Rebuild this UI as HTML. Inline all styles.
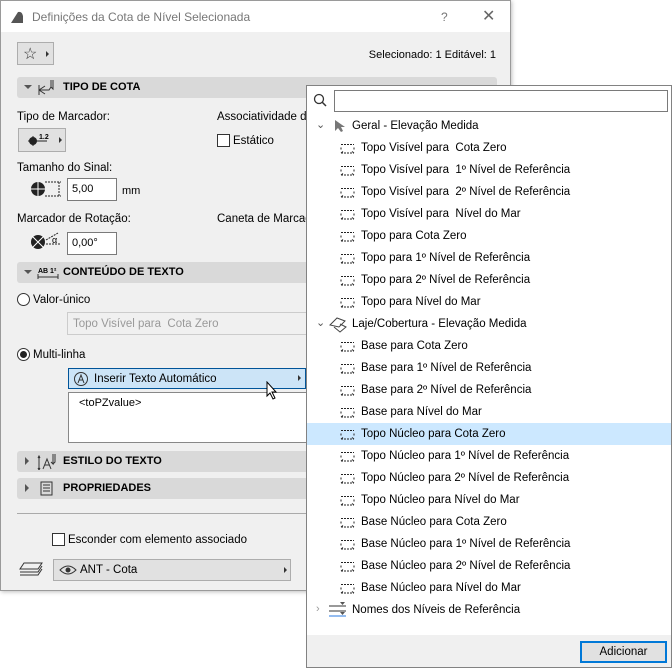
<!DOCTYPE html>
<html><head><meta charset="utf-8"><style>
*{margin:0;padding:0;box-sizing:border-box}
body{width:672px;height:668px;background:#fff;position:relative;overflow:hidden;font-family:"Liberation Sans",sans-serif;font-size:11.5px;color:#000}
.a{position:absolute;white-space:nowrap}
#dlg{position:absolute;left:0;top:0;width:511px;height:591px;background:#f0f0f0;border:1px solid #9a9a9a;box-shadow:1px 1px 4px rgba(0,0,0,.25)}
#tb{position:absolute;left:0;top:0;width:509px;height:31px;background:#fff}
.bar{position:absolute;left:16px;width:480px;height:21px;background:#d9d9d9;border-radius:3px;font-weight:bold;font-size:11px}
.bar .t{position:absolute;left:46px;top:4px}
.tri{position:absolute;left:7px;top:8px;width:0;height:0;border-left:4px solid transparent;border-right:4px solid transparent;border-top:4px solid #555}
.trr{position:absolute;left:8px;top:6px;width:0;height:0;border-top:4px solid transparent;border-bottom:4px solid transparent;border-left:4px solid #555}
.btn{position:absolute;background:#e1e1e1;border:1px solid #adadad}
.inp{position:absolute;background:#fff;border:1px solid #7a7a7a;padding:4px 4px;font-size:11px}
.cb{position:absolute;width:13px;height:13px;border:1px solid #333;background:#fff}
#pop{position:absolute;left:306px;top:85px;width:366px;height:583px;background:#fff;border:1px solid #828282}
.it{position:absolute;left:0;width:364px;height:22px}
.it .t{position:absolute;left:54px;top:5px}
.it svg{position:absolute;left:33px;top:6px}
.hl{background:#cce8ff}
</style></head><body>
<div id="dlg">
<div id="tb">
<svg class="a" style="left:9px;top:9px" width="14" height="14"><path d="M1 13 L8 2 Q12 1 13 6 L13 13 Z" fill="#555"/></svg>
<div class="a" style="left:31px;top:9px;font-size:12px;color:#777">Definições da Cota de Nível Selecionada</div>
<div class="a" style="left:440px;top:9px;font-size:12px;color:#777">?</div>
<div class="a" style="left:481px;top:5px;font-size:16px;color:#666">✕</div>
</div>
<div class="btn" style="left:16px;top:41px;width:37px;height:23px"><span class="a" style="left:5px;top:1px;font-size:16px;color:#333">☆</span><span class="a" style="left:28px;top:8px;border-top:3px solid transparent;border-bottom:3px solid transparent;border-left:3px solid #333"></span></div>
<div class="a" style="right:14px;top:48px;font-size:11px">Selecionado: 1 Editável: 1</div>

<div class="bar" style="top:76px"><div class="tri"></div>
<svg class="a" style="left:20px;top:2px" width="22" height="17"><path d="M2 6 V16 M2 11 L8 15 M2 11 L8 7 M2 11 H12 L14 8 V1 M14 8 L16 10 V1" stroke="#333" fill="none"/></svg>
<div class="t">TIPO DE COTA</div></div>
<div class="a" style="left:16px;top:110px">Tipo de Marcador:</div>
<div class="a" style="left:216px;top:110px">Associatividade d</div>
<div class="btn" style="left:17px;top:127px;width:48px;height:24px"><svg class="a" style="left:8px;top:3px" width="30" height="16"><circle cx="6" cy="9" r="4" fill="#222"/><path d="M1 9 H20 M6 4 V14" stroke="#222"/><text x="12" y="7" font-size="7" font-weight="bold" font-family="Liberation Sans">1.2</text></svg><span class="a" style="left:40px;top:8px;border-top:3px solid transparent;border-bottom:3px solid transparent;border-left:3px solid #333"></span></div>
<div class="cb" style="left:216px;top:133px"></div>
<div class="a" style="left:232px;top:134px">Estático</div>
<div class="a" style="left:16px;top:161px">Tamanho do Sinal:</div>
<svg class="a" style="left:27px;top:177px" width="36" height="22"><circle cx="10" cy="11" r="7" fill="#222"/><path d="M3 11 H17 M10 4 V18" stroke="#fff"/><path d="M17 4 H28 M17 18 H28 M31 4 V18 M29 4 H33 M29 18 H33" stroke="#222" stroke-dasharray="2 1"/></svg>
<div class="inp" style="left:66px;top:177px;width:50px;height:23px">5,00</div>
<div class="a" style="left:121px;top:184px;font-size:11px">mm</div>
<div class="a" style="left:16px;top:212px">Marcador de Rotação:</div>
<div class="a" style="left:216px;top:212px">Caneta de Marcad</div>
<svg class="a" style="left:27px;top:229px" width="36" height="22"><circle cx="10" cy="12" r="7" fill="#222"/><path d="M4 6 L16 18 M4 18 L16 6" stroke="#fff"/><path d="M18 10 L30 3 M18 14 H32" stroke="#222" stroke-dasharray="2 1"/><text x="24" y="13" font-size="9" font-family="Liberation Sans">α</text></svg>
<div class="inp" style="left:66px;top:231px;width:50px;height:23px">0,00°</div>

<div class="bar" style="top:261px"><div class="tri"></div>
<svg class="a" style="left:20px;top:2px" width="24" height="17"><text x="1" y="9" font-size="7" font-family="Liberation Sans">AB 1²</text><path d="M1 10 V15 M1 13 H21 M21 10 V15" stroke="#333"/></svg>
<div class="t">CONTEÚDO DE TEXTO</div></div>
<div class="a" style="left:16px;top:292px;width:13px;height:13px;border:1px solid #333;border-radius:50%;background:#fff"></div>
<div class="a" style="left:32px;top:293px">Valor-único</div>
<div class="a" style="left:66px;top:311px;width:250px;height:23px;border:1px solid #ccc;background:#f0f0f0;color:#999;padding:5px 5px">Topo Visível para &nbsp;Cota Zero</div>
<div class="a" style="left:16px;top:347px;width:13px;height:13px;border:1px solid #333;border-radius:50%;background:#fff"><div style="position:absolute;left:2px;top:2px;width:7px;height:7px;border-radius:50%;background:#222"></div></div>
<div class="a" style="left:32px;top:348px">Multi-linha</div>
<div class="a" style="left:67px;top:367px;width:238px;height:21px;background:#cce4f7;border:1px solid #005499"><svg class="a" style="left:4px;top:2px" width="16" height="16"><circle cx="8" cy="8" r="6.5" stroke="#333" fill="none"/><path d="M5 12 L8 4 L11 12 M6 9 H10" stroke="#333" fill="none"/></svg><span class="a" style="left:25px;top:4px">Inserir Texto Automático</span><span class="a" style="left:229px;top:6px;border-top:3px solid transparent;border-bottom:3px solid transparent;border-left:3px solid #333"></span></div>
<div class="a" style="left:67px;top:391px;width:245px;height:51px;background:#fff;border:1px solid #888;padding:4px 10px;font-size:11px">&lt;toPZvalue&gt;</div>
<svg class="a" style="left:265px;top:380px" width="14" height="20"><path d="M1 1 V15 L4 12 L7 18 L9 17 L6 11 L10 11 Z" fill="#fff" stroke="#000"/></svg>

<div class="bar" style="top:450px"><div class="trr"></div>
<svg class="a" style="left:20px;top:2px" width="22" height="17"><path d="M2 4 V16 M1 5 L2 3 L3 5 M1 15 L2 17 L3 15 M6 16 L10 6 L14 16 M8 12 H12 M14 9 L16 11 V1 M16 11 L18 9 V1" stroke="#333" fill="none"/></svg>
<div class="t">ESTILO DO TEXTO</div></div>
<div class="bar" style="top:477px"><div class="trr"></div>
<svg class="a" style="left:23px;top:3px" width="14" height="15"><rect x="1" y="1" width="11" height="13" fill="none" stroke="#333"/><path d="M3 4 H10 M3 7 H10 M3 10 H10" stroke="#333"/></svg>
<div class="t" style="left:46px">PROPRIEDADES</div></div>
<div class="a" style="left:16px;top:512px;width:480px;height:1px;background:#aaa"></div>
<div class="cb" style="left:51px;top:532px"></div>
<div class="a" style="left:67px;top:533px">Esconder com elemento associado</div>
<svg class="a" style="left:17px;top:560px" width="26" height="18"><path d="M6 2 H24 L20 8 H2 Z M2 11 H20 L24 5 M2 14 H20 L24 8" stroke="#333" fill="none"/></svg>
<div class="btn" style="left:52px;top:558px;width:238px;height:22px"><svg class="a" style="left:5px;top:4px" width="18" height="12"><path d="M1 6 Q9 -2 17 6 Q9 14 1 6 Z" fill="none" stroke="#333"/><circle cx="9" cy="6" r="2.5" fill="#333"/></svg><span class="a" style="left:26px;top:4px">ANT - Cota</span><span class="a" style="left:230px;top:7px;border-top:3px solid transparent;border-bottom:3px solid transparent;border-left:3px solid #333"></span></div>
</div>

<div id="pop">
<svg class="a" style="left:6px;top:7px" width="14" height="14"><circle cx="6" cy="6" r="4.5" stroke="#333" fill="none" stroke-width="1.3"/><path d="M9 9 L13 13" stroke="#333" stroke-width="1.5"/></svg>
<div class="a" style="left:27px;top:4px;width:334px;height:22px;border:1px solid #7a7a7a;background:#fff"></div>
<div class="it" style="top:29px"><span class="a" style="left:9px;top:3px;font-size:11px;color:#555">⌄</span><svg class="a" style="left:27px;top:4px" width="12" height="14"><path d="M1 1 V12 L4 9 L7 13 L9 12 L7 8 L11 8 Z" fill="#777"/></svg><span class="t" style="left:45px">Geral - Elevação Medida</span></div>
<div id="items"></div>
<div class="it" style="top:227px"><span class="a" style="left:9px;top:3px;font-size:11px;color:#555">⌄</span><svg class="a" style="left:21px;top:3px" width="20" height="17"><path d="M2 9 L9 2 L17 5 L11 11 Z M6 11 L12 16 L18 11 L12 8" stroke="#444" fill="none"/></svg><span class="t" style="left:45px">Laje/Cobertura - Elevação Medida</span></div>
<div class="it" style="top:513px"><span class="a" style="left:9px;top:4px;font-size:11px;color:#999">›</span><svg class="a" style="left:21px;top:2px" width="20" height="16"><path d="M1 5 H18 M1 10 H18" stroke="#333"/><path d="M1 15 H18" stroke="#2a7ae2"/><path d="M12 1 H17 L14.5 4 Z M12 11 H17 L14.5 14 Z" fill="#555"/></svg><span class="t" style="left:45px">Nomes dos Níveis de Referência</span></div>
<div class="a" style="left:0;top:549px;width:364px;height:32px;background:#f0f0f0"></div>
<div class="a" style="left:273px;top:555px;width:87px;height:22px;background:#e1e1e1;border:2px solid #0078d7;text-align:center;padding-top:3px">Adicionar</div>
</div>
<script>
var L=["Topo Visível para  Cota Zero","Topo Visível para  1º Nível de Referência","Topo Visível para  2º Nível de Referência","Topo Visível para  Nível do Mar","Topo para Cota Zero","Topo para 1º Nível de Referência","Topo para 2º Nível de Referência","Topo para Nível do Mar",null,"Base para Cota Zero","Base para 1º Nível de Referência","Base para 2º Nível de Referência","Base para Nível do Mar","Topo Núcleo para Cota Zero","Topo Núcleo para 1º Nível de Referência","Topo Núcleo para 2º Nível de Referência","Topo Núcleo para Nível do Mar","Base Núcleo para Cota Zero","Base Núcleo para 1º Nível de Referência","Base Núcleo para 2º Nível de Referência","Base Núcleo para Nível do Mar"];
var h="";var ic='<svg width="16" height="12"><path d="M1 1.5 H14 M1 4.5 V7 M14 4.5 V7 M1 10 H14" stroke="#222" stroke-dasharray="2 1"/><path d="M1 10 L3 8.5 M14 10 L12 8.5" stroke="#222"/></svg>';
L.forEach(function(t,i){if(t===null)return;var y=51+i*22;h+='<div class="it'+(i==13?' hl':'')+'" style="top:'+y+'px">'+ic+'<span class="t">'+t.replace(/  /g,' &nbsp;')+'</span></div>';});
document.getElementById("items").outerHTML=h;
</script>
</body></html>
